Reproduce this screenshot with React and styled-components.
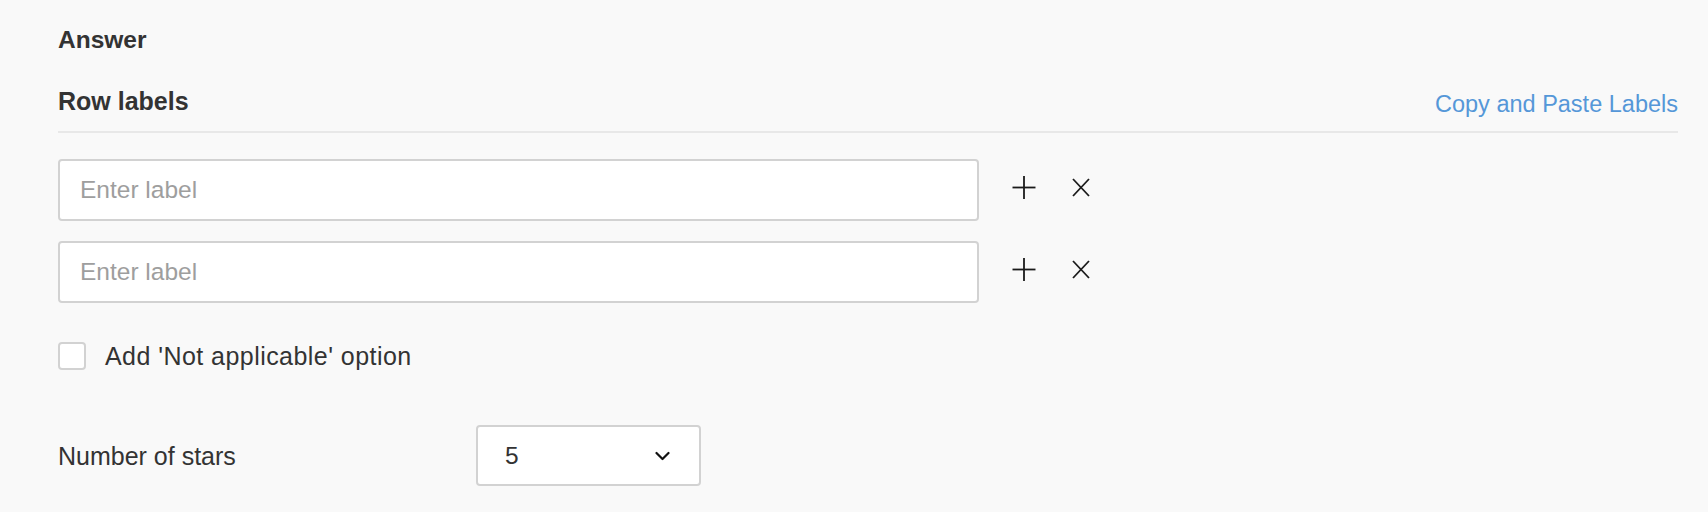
import React from 'react';
import styled, { createGlobalStyle } from 'styled-components';

const GlobalStyle = createGlobalStyle`
  html, body {
    margin: 0;
    padding: 0;
    background: #f9f9f9;
  }
  body {
    font-family: "Liberation Sans", Arial, sans-serif;
    color: #333;
  }
`;

const Page = styled.div`
  padding: 25px 30px 0 58px;
  min-height: 512px;
  box-sizing: border-box;
  background: #f9f9f9;
`;

const SectionTitle = styled.h2`
  margin: 0;
  font-size: 24.5px;
  line-height: 30px;
  font-weight: bold;
  color: #333;
`;

const LabelsHeader = styled.div`
  display: flex;
  justify-content: space-between;
  align-items: baseline;
  margin-top: 31px;
  padding-bottom: 14px;
  border-bottom: 2px solid #e8e8e8;
`;

const SubTitle = styled.h3`
  margin: 0;
  font-size: 25px;
  line-height: 30px;
  font-weight: bold;
  color: #333;
`;

const PasteLink = styled.a`
  font-size: 23.5px;
  line-height: 30px;
  color: #5597d8;
  text-decoration: none;
  position: relative;
  top: 2px;
  cursor: pointer;
`;

const LabelList = styled.div`
  display: flex;
  flex-direction: column;
  gap: 20px;
  margin-top: 26px;
`;

const LabelRow = styled.div`
  display: flex;
  align-items: center;
`;

const LabelInput = styled.input`
  width: 921px;
  height: 62px;
  box-sizing: border-box;
  border: 2px solid #d2d2d2;
  border-radius: 4px;
  background: #fff;
  padding: 0 20px;
  font-family: "Liberation Sans", Arial, sans-serif;
  font-size: 24.5px;
  color: #333;
  outline: none;

  &::placeholder {
    color: #9e9e9e;
  }
`;

const IconButton = styled.button`
  display: flex;
  align-items: center;
  justify-content: center;
  padding: 0;
  border: none;
  background: none;
  cursor: pointer;
  margin-left: ${(p) => p.$gap}px;
  margin-bottom: 6px;
  color: #1a1a1a;
`;

const CheckRow = styled.label`
  display: flex;
  align-items: center;
  gap: 19px;
  margin-top: 38px;
  cursor: pointer;
`;

const CheckBox = styled.span`
  width: 28px;
  height: 28px;
  box-sizing: border-box;
  border: 2px solid #d2d2d2;
  border-radius: 4px;
  background: #fff;
`;

const CheckText = styled.span`
  font-size: 25px;
  line-height: 30px;
  letter-spacing: 0.45px;
  color: #333;
`;

const FieldRow = styled.div`
  display: flex;
  align-items: center;
  margin-top: 54px;
`;

const FieldLabel = styled.span`
  width: 418px;
  font-size: 25px;
  line-height: 30px;
  color: #333;
  position: relative;
  top: 0;
`;

const SelectBox = styled.div`
  width: 225px;
  height: 61px;
  box-sizing: border-box;
  border: 2px solid #d2d2d2;
  border-radius: 4px;
  background: #fff;
  display: flex;
  align-items: center;
  justify-content: space-between;
  padding: 0 29px 0 27px;
  font-size: 24.5px;
  color: #333;
  cursor: pointer;
`;

const PlusIcon = () => (
  <svg width="24" height="23" viewBox="0 0 24 23" fill="none" stroke="currentColor" strokeWidth="1.8">
    <line x1="12" y1="0" x2="12" y2="23" />
    <line x1="0.5" y1="11.5" x2="23.5" y2="11.5" />
  </svg>
);

const CloseIcon = () => (
  <svg width="18" height="19" viewBox="0 0 18 19" fill="none" stroke="currentColor" strokeWidth="1.8">
    <line x1="1" y1="1" x2="17" y2="18" />
    <line x1="17" y1="1" x2="1" y2="18" />
  </svg>
);

const ChevronDown = () => (
  <svg width="15" height="10" viewBox="0 0 15 10" fill="none" stroke="#111" strokeWidth="2.2" strokeLinecap="round" strokeLinejoin="round">
    <polyline points="1.5,2 7.5,8 13.5,2" />
  </svg>
);

const rows = [1, 2];

export default function App() {
  return (
    <Page>
      <GlobalStyle />
      <SectionTitle>Answer</SectionTitle>

      <LabelsHeader>
        <SubTitle>Row labels</SubTitle>
        <PasteLink>Copy and Paste Labels</PasteLink>
      </LabelsHeader>

      <LabelList>
        {rows.map((r) => (
          <LabelRow key={r}>
            <LabelInput placeholder="Enter label" />
            <IconButton $gap={33} aria-label="Add label">
              <PlusIcon />
            </IconButton>
            <IconButton $gap={36} aria-label="Remove label">
              <CloseIcon />
            </IconButton>
          </LabelRow>
        ))}
      </LabelList>

      <CheckRow>
        <CheckBox />
        <CheckText>Add 'Not applicable' option</CheckText>
      </CheckRow>

      <FieldRow>
        <FieldLabel>Number of stars</FieldLabel>
        <SelectBox>
          <span>5</span>
          <ChevronDown />
        </SelectBox>
      </FieldRow>
    </Page>
  );
}
